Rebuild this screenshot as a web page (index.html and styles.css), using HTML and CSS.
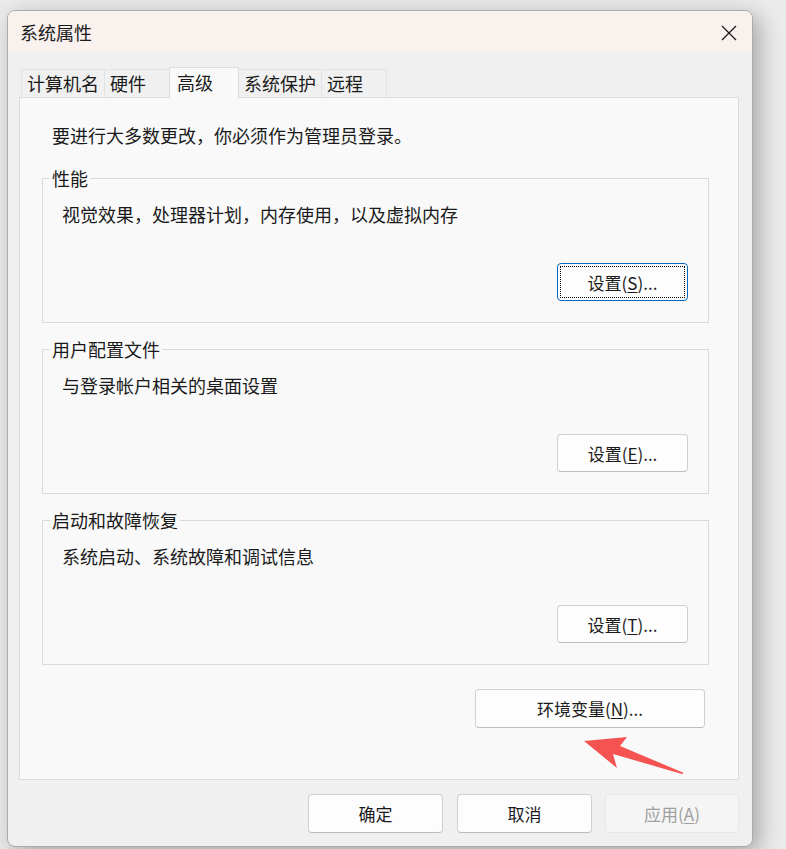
FILE: index.html
```html
<html>
    <head>
        <title>系统属性</title>
        <link rel="stylesheet" href="styles.css">
    </head>
    <body>
        <div class="window">
            <div class="titlebar">
                <span class="title">系统属性</span>
                <span class="close">
                    <svg width="16" height="16" viewBox="0 0 16 16">
                        <path d="M1 1 L15 15 M15 1 L1 15" stroke="#1a1a1a" stroke-width="1.3" fill="none"/>
                    </svg>
                </span>
            </div>
            <div class="tabs">
                <div class="tab tab-name">计算机名</div>
                <div class="tab">硬件</div>
                <div class="tab active">高级</div>
                <div class="tab">系统保护</div>
                <div class="tab">远程</div>
            </div>
            <div class="panel">
                <p class="intro">要进行大多数更改，你必须作为管理员登录。</p>

                <fieldset class="group">
                    <legend>性能</legend>
                    <p class="desc">视觉效果，处理器计划，内存使用，以及虚拟内存</p>
                    <div class="row">
                        <button class="btn focused"><span class="dots">设置(<u>S</u>)...</span></button>
                    </div>
                </fieldset>

                <fieldset class="group">
                    <legend>用户配置文件</legend>
                    <p class="desc">与登录帐户相关的桌面设置</p>
                    <div class="row">
                        <button class="btn">设置(<u>E</u>)...</button>
                    </div>
                </fieldset>

                <fieldset class="group">
                    <legend>启动和故障恢复</legend>
                    <p class="desc">系统启动、系统故障和调试信息</p>
                    <div class="row">
                        <button class="btn">设置(<u>T</u>)...</button>
                    </div>
                </fieldset>

                <div class="env-row">
                    <button class="btn env">环境变量(<u>N</u>)...</button>
                </div>
            </div>
            <div class="footer">
                <button class="btn wide">确定</button>
                <button class="btn wide">取消</button>
                <button class="btn wide disabled">应用(<u>A</u>)</button>
            </div>
        </div>

        <!-- red annotation arrow -->
        <svg class="arrow" width="110" height="46" viewBox="580 732 110 46">
            <polygon points="584,741 627,737 620,746 684,773 682,774 613,754 617,768" fill="#f55252"/>
        </svg>
    </body>
</html>
```

FILE: styles.css
```css
body {
    margin: 0;
    background: #ebebeb;
    font-family: "Noto Sans CJK SC", "Noto Sans", sans-serif;
    color: #1a1a1a;
    position: relative;
}
.window {
    margin: 10px 0 0 7px;
    width: 746px;
    height: 837px;
    box-sizing: border-box;
    border: 1px solid #ababab;
    border-radius: 8px;
    background: #f0f0f0;
    overflow: hidden;
    box-shadow: 6px 6px 22px rgba(0, 0, 0, 0.3);
}
.titlebar {
    height: 42px;
    background: #f9f1ee;
    display: flex;
    align-items: center;
    justify-content: space-between;
    padding: 0 15px 0 12px;
}
.title {
    font-size: 18px;
    line-height: 24px;
}
.close {
    display: flex;
    margin-top: 1px;
}
/* tab strip */
.tabs {
    display: flex;
    align-items: flex-end;
    height: 30px;
    margin: 14px 0 0 13px;
}
.tab {
    height: 28px;
    box-sizing: border-box;
    min-width: 66px;
    padding: 0 5px;
    font-size: 18px;
    line-height: 27px;
    background: #f0f0f0;
    border: 1px solid #e2e2e2;
    border-bottom: none;
    margin-right: -1px;
}
.tab-name {
    min-width: 83px;
}
.tab.active {
    height: 31px;
    min-width: 70px;
    padding-left: 7px;
    line-height: 28px;
    margin-bottom: -1px;
    background: #f9f9f9;
    border-color: #dcdcdc;
    position: relative;
}
/* main panel */
.panel {
    margin: 0 13px 0 11px;
    height: 683px;
    box-sizing: border-box;
    background: #f9f9f9;
    border: 1px solid #dcdcdc;
    padding: 25px 29px 0 22px;
}
.intro {
    margin: 0 0 21px 10px;
    font-size: 18px;
    line-height: 24px;
}
.group {
    margin: 0 0 16px 0;
    border: 1px solid #dadada;
    padding: 14px 20px 21px 19px;
    min-width: 0;
}
.group legend {
    margin-left: -12px;
    padding: 0 2px;
    font-size: 18px;
    line-height: 20px;
}
.desc {
    margin: 0;
    font-size: 18px;
    line-height: 24px;
}
.row {
    display: flex;
    justify-content: flex-end;
    margin-top: 37px;
}
/* buttons */
.btn {
    width: 131px;
    height: 38px;
    background: #fdfdfd;
    border: 1px solid #d0d0d0;
    border-bottom-color: #bcbcbc;
    border-radius: 4px;
    font-family: "Noto Sans CJK SC", "Noto Sans", sans-serif;
    font-size: 17px;
    color: #1a1a1a;
    padding: 0;
    display: flex;
    align-items: center;
    justify-content: center;
}
.btn u {
    text-underline-offset: 2px;
}
.btn.focused {
    border: 1px solid #0067c0;
    padding: 2px;
}
.dots {
    width: 100%;
    height: 100%;
    box-sizing: border-box;
    border: 1px dotted #000;
    display: flex;
    align-items: center;
    justify-content: center;
}
.env-row {
    display: flex;
    justify-content: flex-end;
    padding-right: 4px;
    margin-top: 24px;
}
.btn.env {
    width: 230px;
    height: 39px;
}
.footer {
    display: flex;
    justify-content: flex-end;
    gap: 14px;
    margin: 14px 13px 0 0;
}
.btn.wide {
    width: 135px;
    height: 39px;
}
.btn.wide.disabled {
    width: 134px;
    margin-left: -1px;
    background: #f5f5f5;
    border-color: #e6e6e6;
    color: #a0a0a0;
}
/* red arrow drawn over the screenshot */
.arrow {
    position: absolute;
    left: 580px;
    top: 732px;
}
```
